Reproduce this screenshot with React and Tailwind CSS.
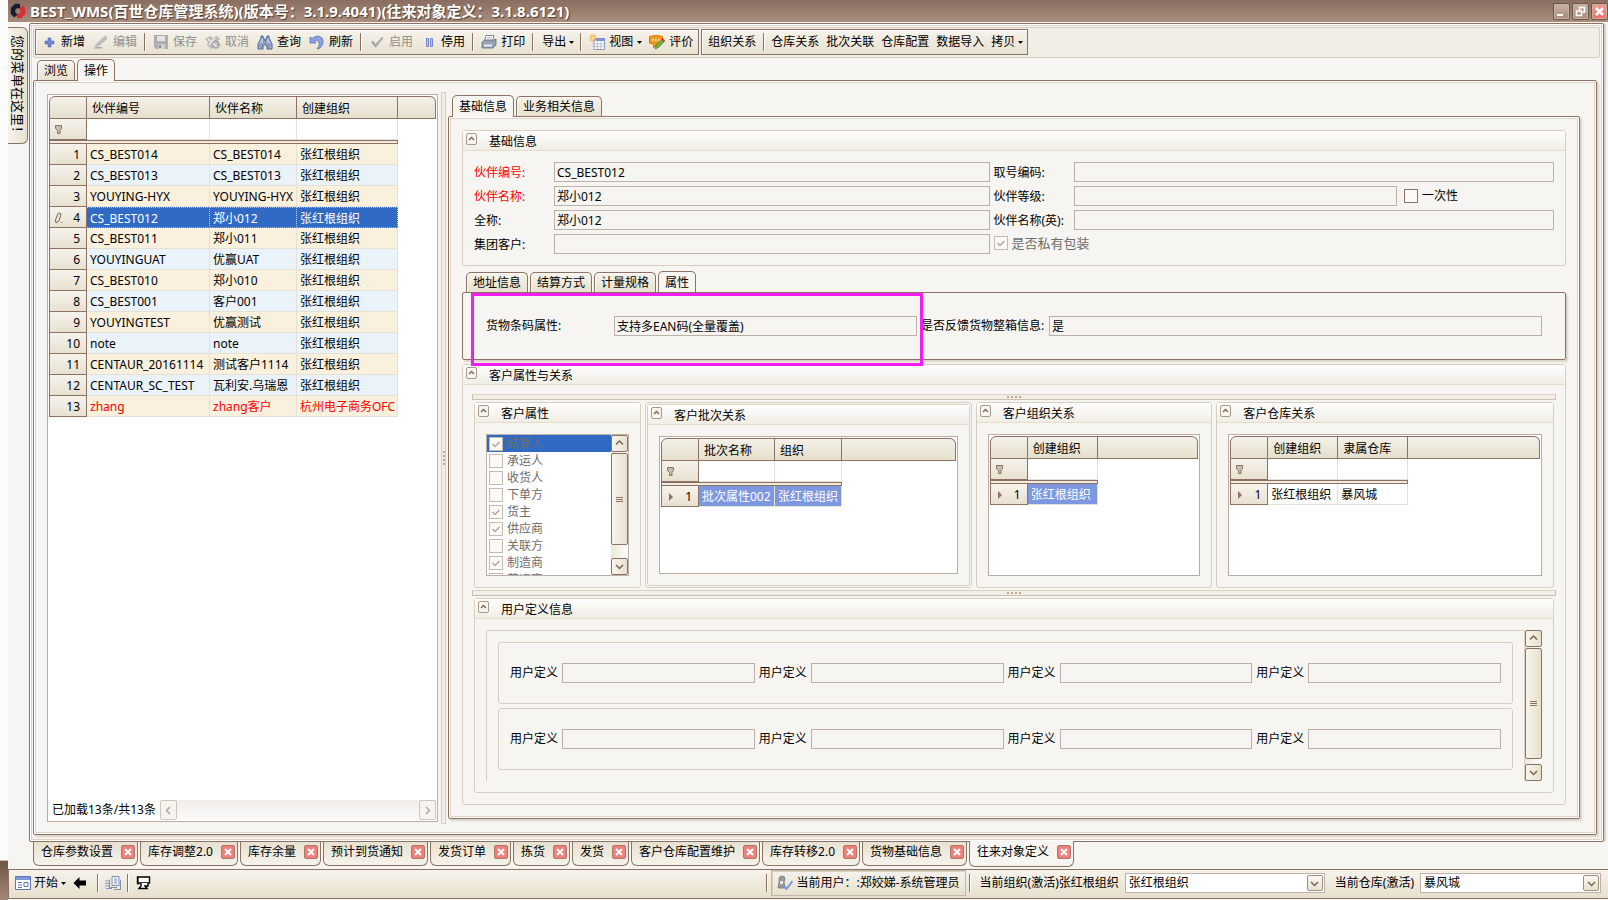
import { useState } from "react";
import clsx from "clsx";

const partners = [
  ["CS_BEST014", "CS_BEST014", "张红根组织"],
  ["CS_BEST013", "CS_BEST013", "张红根组织"],
  ["YOUYING-HYX", "YOUYING-HYX", "张红根组织"],
  ["CS_BEST012", "郑小012", "张红根组织"],
  ["CS_BEST011", "郑小011", "张红根组织"],
  ["YOUYINGUAT", "优赢UAT", "张红根组织"],
  ["CS_BEST010", "郑小010", "张红根组织"],
  ["CS_BEST001", "客户001", "张红根组织"],
  ["YOUYINGTEST", "优赢测试", "张红根组织"],
  ["note", "note", "张红根组织"],
  ["CENTAUR_20161114", "测试客户1114", "张红根组织"],
  ["CENTAUR_SC_TEST", "瓦利安.乌瑞恩", "张红根组织"],
  ["zhang", "zhang客户", "杭州电子商务OFC"],
];

const roles = [
  ["结算人", true],
  ["承运人", false],
  ["收货人", false],
  ["下单方", false],
  ["货主", true],
  ["供应商", true],
  ["关联方", false],
  ["制造商", true],
  ["营运商", false],
];

const docTabs = [
  "仓库参数设置",
  "库存调整2.0",
  "库存余量",
  "预计到货通知",
  "发货订单",
  "拣货",
  "发货",
  "客户仓库配置维护",
  "库存转移2.0",
  "货物基础信息",
  "往来对象定义",
];

/* ---------- icons ---------- */

function Icon({ children, className }) {
  return (
    <svg viewBox="0 0 16 16" className={clsx("size-4 shrink-0", className)} fill="none" aria-hidden="true">
      {children}
    </svg>
  );
}

const AddIcon = () => (
  <Icon>
    <path d="M7 4h3v3h3v3h-3v3H7v-3H4V7h3z" fill="#6f86d6" stroke="#5468b4" strokeWidth=".6" />
  </Icon>
);

const EditIcon = () => (
  <Icon>
    <path d="M1 14l2-4 8-7.500q2-1 3 .5 .8 1.500-.6 2.800L6 12z" fill="#bdbdbd" />
    <path d="M0 14.500h8l2-1.500H4z" fill="#a8a8a8" />
  </Icon>
);

const SaveIcon = () => (
  <Icon>
    <path d="M1 1h14v14H3l-2-2z" fill="#aeaeae" />
    <path d="M4 2h8v5H4z" fill="#e4e4e4" />
    <path d="M5 10h7v5H5z" fill="#d0d0d0" />
    <path d="M6 11h2v3H6z" fill="#8e8e8e" />
  </Icon>
);

const CancelIcon = () => (
  <Icon>
    <path d="M0 5l5-3 3 2 4-2 3 3-2 2 3 4-4 4-3-1-3 1-4-4 1-3z" fill="#bcbcbc" />
    <path d="M3 5l9 8M10 4l-6 7" stroke="#f2f0ea" strokeWidth="1.200" />
    <circle cx="10.500" cy="10.500" r="3.500" stroke="#9c9c9c" />
  </Icon>
);

const FindIcon = () => (
  <Icon>
    <path
      d="M4 2h2v2h1v2h2V4h1V2h2v2l3 6v5h-5v-4H6v4H1v-5l3-6z"
      fill="#aebfe0"
      stroke="#4b5f8c"
      strokeWidth="1"
    />
    <path d="M3 10h2v3H3zM11 10h2v3h-2zM7 6v4M9 6v4" stroke="#4b5f8c" strokeWidth=".8" fill="#e7edf8" />
  </Icon>
);

const RefreshIcon = () => (
  <Icon>
    <path d="M1 3l2 1.500Q9 0 13 4q3 5-2 10l-3 1q4-5 1-8-1.500-1.500-4 .2L7 9H1z" fill="#8ea2e2" stroke="#5c70ba" strokeWidth=".8" />
  </Icon>
);

const CheckIcon = () => (
  <Icon>
    <path d="M2 8l2-1.500L6.500 10 13 3l1.500 1L7 13.500H6z" fill="#a8a8a8" />
  </Icon>
);

const PauseIcon = () => (
  <Icon>
    <path d="M5.500 4.500h2v8h-2zM9.500 4.500h2v8h-2z" fill="#b9c5ee" stroke="#7286cc" />
  </Icon>
);

const PrintIcon = () => (
  <Icon>
    <path d="M5 1.500h8L11.500 7h-8z" fill="#fff" stroke="#7d8796" />
    <path d="M1 8l3-2h9l2-1v6l-3 3H1z" fill="#97a3b6" stroke="#5f6b80" strokeWidth=".8" />
    <path d="M3 10.500h8v2H3z" fill="#e6ebf3" />
    <path d="M6 3.500h5M5.500 5h5" stroke="#a3adbb" strokeWidth=".7" />
  </Icon>
);

const ViewIcon = () => (
  <Icon>
    <path d="M5 4.500h10.500v11H5z" fill="#fff" stroke="#8a97b8" />
    <path d="M5 4h11v3H5z" fill="#7f93d8" />
    <path d="M5 10h10M5 12.500h10M8.500 7v8M12 7v8" stroke="#a9b4cd" strokeWidth=".8" />
    <path d="M4 0v8M0 4h8M1 1l6 6M7 1L1 7" stroke="#f5b44e" strokeWidth="1.200" />
    <circle cx="4" cy="4" r="1.500" fill="#ffe9a8" />
  </Icon>
);

const RateIcon = () => (
  <Icon>
    <path d="M.5 2.500q7-2 13 0v6q-3 1.500-6 1.500l-3 4v-4l-4-1z" fill="#f49a1c" stroke="#d27805" />
    <path d="M3 6h1.500M6 6h1.500M9 6h1.500" stroke="#fff" strokeWidth="1.600" />
    <path d="M6 15l1-4 6-6 2.500 2.500-6 6z" fill="#6fb33c" stroke="#4d8526" strokeWidth=".7" />
    <path d="M12 5.500l1.500-1.500L16 6.500 14.800 8z" fill="#dc3030" />
  </Icon>
);

function Caret() {
  return (
    <svg viewBox="0 0 5 3" className="h-[3px] w-[5px] shrink-0" aria-hidden="true">
      <path d="M0 0h5L2.500 3z" fill="#000" />
    </svg>
  );
}

function Chevron({ dir = "up", className = "stroke-[#7c6353]" }) {
  const d = {
    up: "M1 5.500L4.500 2 8 5.500",
    down: "M1 3L4.500 6.500 8 3",
    left: "M6 1L2.500 4.500 6 8",
    right: "M3 1l3.500 3.500L3 8",
  }[dir];
  return (
    <svg viewBox="0 0 9 9" className={clsx("size-[9px]", className)} fill="none" strokeWidth="1.500" aria-hidden="true">
      <path d={d} />
    </svg>
  );
}

function FilterIcon() {
  return (
    <svg viewBox="0 0 9 9" className="ml-1 size-[9px]" fill="#c9bcae" stroke="#8d7264" aria-hidden="true">
      <path d="M1.500 .5h6v3l-1.500 2v3H3.500V5.500L1.500 3.500z" />
    </svg>
  );
}

/* ---------- small controls ---------- */

function ToolButton({ icon: IconComponent, children, disabled, menu }) {
  return (
    <button
      type="button"
      disabled={disabled}
      className={clsx(
        "flex h-full items-center whitespace-nowrap",
        IconComponent ? "gap-1 pl-1" : "gap-[3px] pl-[5px]",
        menu ? "pr-[3px]" : "pr-1",
        disabled && "text-[#8f8f8f]"
      )}
    >
      {IconComponent && <IconComponent />}
      {children}
      {menu && <Caret />}
    </button>
  );
}

function Separator() {
  return <span className="mx-[3px] h-[18px] w-0.5 shrink-0 border-l border-[#8d7264] bg-white" />;
}

function Tab({ active, children, onClick }) {
  return (
    <button
      type="button"
      role="tab"
      aria-selected={active}
      onClick={onClick}
      className={clsx(
        "whitespace-nowrap rounded-t-[5px] border border-b-0 border-[#8d7264] px-1.5",
        active
          ? "relative -mb-px h-[22px] bg-[#f7f5f1]"
          : "h-5 bg-linear-to-b from-[#f6f3ec] to-[#e8e1d0] shadow-[inset_1px_1px_0_#fff]"
      )}
    >
      {children}
    </button>
  );
}

function TabStrip({ tabs, initial, className }) {
  const [current, setCurrent] = useState(initial);
  return (
    <div role="tablist" className={clsx("flex h-[21px] items-end gap-0.5", className)}>
      {tabs.map((t) => (
        <Tab key={t} active={t === current} onClick={() => setCurrent(t)}>
          {t}
        </Tab>
      ))}
    </div>
  );
}

function TextBox({ id, value = "", label, className }) {
  return (
    <input
      id={id}
      type="text"
      aria-label={label}
      defaultValue={value}
      className={clsx("h-5 min-w-0 border border-[#bdb0a8] bg-transparent px-0.5 outline-none", className)}
    />
  );
}

function CheckBox({ checked, disabled, onChange, children, className }) {
  return (
    <label className={clsx("flex items-center whitespace-nowrap", className)}>
      <span className="grid">
        <input
          type="checkbox"
          defaultChecked={checked}
          disabled={disabled}
          onChange={onChange}
          className={clsx(
            "size-3.5 appearance-none border bg-[#fbfaf7] [grid-area:1/1]",
            disabled ? "border-[#c4bab1]" : "border-[#8d7264]"
          )}
        />
        {checked && (
          <svg viewBox="0 0 14 14" className="size-3.5 [grid-area:1/1]" fill="none" stroke="#b3a89f" strokeWidth="1.500">
            <path d="M3.500 7l2.500 2.500L10.500 5" />
          </svg>
        )}
      </span>
      {children}
    </label>
  );
}

function ScrollButton({ dir }) {
  return (
    <button
      type="button"
      aria-label={dir}
      className="grid size-[17px] shrink-0 place-items-center rounded-xs border border-[#8d7264] bg-linear-to-r from-[#f8f5ee] to-[#e7e0cd]"
    >
      <Chevron dir={dir} />
    </button>
  );
}

function VScroll({ gap }) {
  return (
    <div className="flex w-[17px] shrink-0 flex-col bg-linear-to-r from-[#ece5d9] to-white">
      <ScrollButton dir="up" />
      <div className="my-px grid flex-1 place-content-center gap-px rounded-xs border border-[#8d7264] bg-linear-to-r from-[#f8f5ee] to-[#e7e0cd]">
        <i className="h-px w-[7px] bg-[#8d7264]" />
        <i className="h-px w-[7px] bg-[#8d7264]" />
        <i className="h-px w-[7px] bg-[#8d7264]" />
      </div>
      <div className={gap} />
      <ScrollButton dir="down" />
    </div>
  );
}

function Splitter() {
  return (
    <div className="flex h-1.5 shrink-0 items-center justify-center gap-0.5 border border-t-[#dcd2c4] border-r-[#cabfae] border-b-[#cabfae] border-l-[#cabfae] bg-[#f3efe6]">
      <i className="size-0.5 bg-[#b8a898]" />
      <i className="size-0.5 bg-[#b8a898]" />
      <i className="size-0.5 bg-[#b8a898]" />
      <i className="size-0.5 bg-[#b8a898]" />
    </div>
  );
}

function Group({ title, children, className, bodyClass }) {
  return (
    <section className={clsx("flex min-w-0 flex-col rounded-[3px] border border-[#d9cfc1]", className)}>
      <header className="flex h-5 shrink-0 items-center border-b border-[#e6dec9] bg-linear-to-b from-white to-[#f0ede5] pl-[3px]">
        <button
          type="button"
          aria-label="collapse"
          className="-mt-1 grid h-3 w-[11px] place-items-center rounded-xs border border-[#a8998c] bg-[#f8f5ee]"
        >
          <svg viewBox="0 0 7 5" className="h-[5px] w-[7px]" fill="none" stroke="#7c6353" strokeWidth="1.300">
            <path d="M1 4l2.500-2.500L6 4" />
          </svg>
        </button>
        <h2 className="ml-3 pt-0.5">{title}</h2>
      </header>
      <div className={clsx("flex flex-1 flex-col", bodyClass)}>{children}</div>
    </section>
  );
}

/* ---------- data grid ---------- */

const head = "h-[23px] border-t border-r border-b border-[#8d7264] bg-linear-to-b from-[#f4f1e9] to-[#e6dfcd] font-normal";
const indicator = "border-x border-b border-[#8d7264] bg-linear-to-b from-[#f6f3ec] to-[#e8e1d0]";

function DataGrid({ label, columns, widths, rows, cellClass, rowMark, children, className }) {
  return (
    <div className={clsx("flex flex-col border border-[#b9aca2] bg-white p-px", className)}>
      <table aria-label={label} className="w-full table-fixed border-separate border-spacing-0">
        <colgroup>
          <col className="w-[38px]" />
          {widths.map((w, i) => (
            <col key={i} className={w} />
          ))}
          <col />
        </colgroup>
        <thead>
          <tr>
            <th className={clsx(head, "rounded-tl-md border-l")} />
            {columns.map((c) => (
              <th key={c} scope="col" className={clsx(head, "pt-0.5 pl-[5px] text-left whitespace-nowrap")}>
                {c}
              </th>
            ))}
            <th className={clsx(head, "rounded-tr-md")} />
          </tr>
        </thead>
        <tbody>
          <tr>
            <td className={clsx(indicator, "h-[21px]")}>
              <FilterIcon />
            </td>
            {columns.map((c) => (
              <td key={c} className="border-r border-b border-[#e6e1d4]" />
            ))}
            <td />
          </tr>
          <tr>
            <td colSpan={columns.length + 1} className="h-1 border border-[#8d7264] bg-[#f0ebdf]" />
            <td />
          </tr>
          {rows.map((row, r) => (
            <tr key={r}>
              <td className={clsx(indicator, "h-[21px] pt-0.5")}>
                <div className="flex items-center justify-between pr-1.5 pl-1">
                  <span className="w-2.5">{rowMark(r)}</span>
                  {r + 1}
                </div>
              </td>
              {row.map((cell, c) => (
                <td key={c} className={clsx("border-r border-b pt-0.5 pl-[3px] whitespace-nowrap", cellClass(r))}>
                  {cell}
                </td>
              ))}
              <td />
            </tr>
          ))}
        </tbody>
      </table>
      {children}
    </div>
  );
}

const currentRow = () => (
  <svg viewBox="0 0 10 8" className="h-2 w-2.5" aria-hidden="true">
    <path d="M3 0l4 4-4 4z" fill="#8d7264" />
  </svg>
);

const editMark = (r) =>
  r === 3 && (
    <svg viewBox="0 0 10 12" className="h-3 w-2.5" fill="#efe9dc" stroke="#7c6353" aria-hidden="true">
      <path d="M1.500 8L4 1.500q2-1.500 3 .5L5 9l-3 2zM7.500 10.500h1" />
    </svg>
  );

function partnerClass(r) {
  if (r === 3) return "border-t border-t-[#9db8e6] border-r-[#c8d6ee] border-b-[#9db8e6] border-dotted bg-[#316ac5] text-white";
  return clsx(
    "border-[#e6e1d4]",
    r % 2 ? "bg-[#eaf3fa]" : "bg-[#faf0de]",
    r === 12 && "text-[#f00]"
  );
}

function PartnerList() {
  return (
    <DataGrid
      label="往来对象"
      className="my-0.5 w-[391px] shrink-0"
      columns={["伙伴编号", "伙伴名称", "创建组织"]}
      widths={["w-[123px]", "w-[87px]", "w-[101px]"]}
      rows={partners}
      cellClass={partnerClass}
      rowMark={editMark}
    >
      <div className="mt-auto flex items-center">
        <span className="pr-1 pl-[3px] whitespace-nowrap">已加载13条/共13条</span>
        <div className="flex h-5 flex-1 justify-between bg-linear-to-b from-[#f1eee9] to-[#fbfaf8]">
          <button type="button" aria-label="left" className="grid w-[17px] place-items-center rounded-xs border border-[#cfc6ba] bg-[#f6f4f0]">
            <Chevron dir="left" className="stroke-[#b3a89c]" />
          </button>
          <button type="button" aria-label="right" className="grid w-[17px] place-items-center rounded-xs border border-[#cfc6ba] bg-[#f6f4f0]">
            <Chevron dir="right" className="stroke-[#b3a89c]" />
          </button>
        </div>
      </div>
    </DataGrid>
  );
}

/* ---------- right side ---------- */

function BasicInfo() {
  return (
    <Group title="基础信息" bodyClass="p-[11px]">
      <div className="grid grid-cols-[80px_436fr_84px_481fr] items-center gap-y-1 whitespace-nowrap">
        <label htmlFor="code" className="pt-0.5 text-[#f00]">伙伴编号:</label>
        <TextBox id="code" value="CS_BEST012" />
        <label htmlFor="seq" className="pt-0.5 pl-1">取号编码:</label>
        <TextBox id="seq" />

        <label htmlFor="name" className="pt-0.5 text-[#f00]">伙伴名称:</label>
        <TextBox id="name" value="郑小012" />
        <label htmlFor="level" className="pt-0.5 pl-1">伙伴等级:</label>
        <div className="flex">
          <TextBox id="level" className="flex-1" />
          <CheckBox className="w-[157px] gap-1 pl-[7px]">一次性</CheckBox>
        </div>

        <label htmlFor="full" className="pt-0.5">全称:</label>
        <TextBox id="full" value="郑小012" />
        <label htmlFor="english" className="pt-0.5 pl-1">伙伴名称(英):</label>
        <TextBox id="english" />

        <label htmlFor="parent" className="pt-0.5">集团客户:</label>
        <TextBox id="parent" />
        <CheckBox checked disabled className="col-span-2 gap-1 pb-0.5 pl-1 text-[13px] text-[#6d6d6d]">
          是否私有包装
        </CheckBox>
      </div>
    </Group>
  );
}

function Attributes() {
  return (
    <div className="relative flex h-[68px] items-center rounded-xs border border-[#8d7264] px-[23px] whitespace-nowrap shadow-[2px_2px_2px_#d9d2c6]">
      <label htmlFor="barcode" className="w-32">货物条码属性:</label>
      <TextBox id="barcode" value="支持多EAN码(全量覆盖)" className="flex-[302]" />
      <label htmlFor="fullbox" className="w-[132px] pl-1">是否反馈货物整箱信息:</label>
      <TextBox id="fullbox" value="是" className="flex-[495]" />
      <div className="pointer-events-none absolute top-0 left-2 h-[73px] w-[41%] border-3 border-[#f31cf3]" />
    </div>
  );
}

function Roles() {
  return (
    <Group title="客户属性" bodyClass="p-[11px]">
      <div className="flex h-[142px] border border-[#bdb0a8] bg-white">
        <ul className="flex-1 overflow-hidden">
          {roles.map(([name, on], i) => (
            <li key={name} className={clsx("flex h-[17px] items-center pl-0.5 text-[#6d6d6d]", i === 0 && "bg-[#316ac5]")}>
              <CheckBox checked={on} disabled className="gap-1">
                {name}
              </CheckBox>
            </li>
          ))}
        </ul>
        <VScroll gap="h-3" />
      </div>
    </Group>
  );
}

function Relations() {
  const picked = () => "border-[#e6e1d4] bg-[#7d97e0] text-white";
  const plain = () => "border-[#e6e1d4]";
  return (
    <div className="grid flex-1 grid-cols-[167px_327fr_237fr_338fr] gap-1 px-0.5">
      <Roles />
      <div className="flex rounded-[3px] border border-[#d9cfc1] p-px">
        <Group title="客户批次关系" className="flex-1" bodyClass="p-[11px]">
          <DataGrid
            label="客户批次关系"
            className="flex-1"
            columns={["批次名称", "组织"]}
            widths={["w-[76px]", "w-[67px]"]}
            rows={[["批次属性002", "张红根组织"]]}
            cellClass={picked}
            rowMark={currentRow}
          />
        </Group>
      </div>
      <Group title="客户组织关系" bodyClass="p-[11px]">
        <DataGrid
          label="客户组织关系"
          className="flex-1"
          columns={["创建组织"]}
          widths={["w-[70px]"]}
          rows={[["张红根组织"]]}
          cellClass={picked}
          rowMark={currentRow}
        />
      </Group>
      <Group title="客户仓库关系" bodyClass="p-[11px]">
        <DataGrid
          label="客户仓库关系"
          className="flex-1"
          columns={["创建组织", "隶属仓库"]}
          widths={["w-[70px]", "w-[70px]"]}
          rows={[["张红根组织", "暴风城"]]}
          cellClass={plain}
          rowMark={currentRow}
        />
      </Group>
    </div>
  );
}

function CustomFields() {
  return (
    <Group title="用户定义信息" className="mx-0.5" bodyClass="p-[11px]">
      <div className="flex">
        <div className="flex-1 space-y-1 rounded-t-xs border border-b-0 border-[#d9cfc1] p-[11px]">
          {[1, 2].map((row) => (
            <div key={row} className="flex h-[62px] items-center gap-1 rounded-[3px] border border-[#d9cfc1] px-[11px]">
              {[1, 2, 3, 4].map((n) => (
                <label key={n} className="flex min-w-0 flex-1 items-center gap-1 whitespace-nowrap">
                  用户定义
                  <TextBox className="w-full" />
                </label>
              ))}
            </div>
          ))}
        </div>
        <VScroll gap="h-1" />
      </div>
    </Group>
  );
}

function Detail() {
  return (
    <div className="flex min-w-0 flex-1 flex-col pt-[3px] pb-[5px]">
      <TabStrip tabs={["基础信息", "业务相关信息"]} initial="基础信息" className="pl-1" />
      <div className="flex flex-1 flex-col rounded-xs border border-[#8d7264] p-[13px] shadow-[inset_0_0_0_1px_#fff,inset_0_0_0_2px_#ddd3c6,2px_2px_2px_#d9d2c6]">
        <BasicInfo />
        <TabStrip tabs={["地址信息", "结算方式", "计量规格", "属性"]} initial="属性" className="mt-[5px] pl-1" />
        <Attributes />
        <Group title="客户属性与关系" className="mt-1 flex-1" bodyClass="gap-0.5 px-[9px] pt-[9px] pb-[11px]">
          <Splitter />
          <Relations />
          <Splitter />
          <CustomFields />
        </Group>
      </div>
    </div>
  );
}

/* ---------- window ---------- */

function TitleBar() {
  const btn = "grid size-[17px] place-items-center rounded-xs border border-[#6e5548] bg-linear-to-b from-[#c9b3a6] to-[#a78b7c] shadow-[inset_0_0_0_1px_#c5b1a5]";
  return (
    <header className="flex h-[22px] items-center bg-linear-to-b from-[#896e61] to-[#a98d7d] pl-0.5">
      <svg viewBox="0 0 16 16" className="size-4" fill="none" strokeWidth="4.500" aria-hidden="true">
        <path d="M10 3H6L3 6v4l3 3" stroke="#1c1c30" />
        <path d="M11 4l2 2.500V10l-3 3H7" stroke="#dc2a33" />
      </svg>
      <h1 className="ml-1 flex-1 text-[15px] leading-5 font-bold whitespace-nowrap text-white [text-shadow:1px_1px_1px_#4d3a30]">
        BEST_WMS(百世仓库管理系统)(版本号：3.1.9.4041)(往来对象定义：3.1.8.6121)
      </h1>
      <div className="flex gap-0.5">
        <button type="button" aria-label="最小化" className={btn}>
          <svg viewBox="0 0 11 11" className="size-[11px]" fill="#fff"><path d="M1 8h6v2H1z" /></svg>
        </button>
        <button type="button" aria-label="还原" className={btn}>
          <svg viewBox="0 0 11 11" className="size-[11px]" fill="none" stroke="#fff" strokeWidth="1.500">
            <path d="M4.500 4V1.500h5v4.500H7.500M1.500 5h5v4.500h-5z" />
          </svg>
        </button>
        <button type="button" aria-label="关闭" className={clsx(btn, "from-[#f59a94] to-[#ee6a66]")}>
          <svg viewBox="0 0 11 11" className="size-[11px]" stroke="#fff" strokeWidth="2.500"><path d="M2 2l7 7M9 2L2 9" /></svg>
        </button>
      </div>
    </header>
  );
}

function Toolbar() {
  const bar = "flex h-[26px] items-center border border-[#8d7264] bg-linear-to-b from-[#f6f3ec] to-[#e8e1d0] px-px shadow-[inset_1px_1px_0_#fff]";
  return (
    <div className="mx-[3px] mt-[3px] flex h-[31px] items-start gap-0.5 rounded-xs border border-[#d8cdbe] bg-[#f1eee6] px-px pt-px">
      <div role="toolbar" className={bar}>
        <ToolButton icon={AddIcon}>新增</ToolButton>
        <ToolButton icon={EditIcon} disabled>编辑</ToolButton>
        <Separator />
        <ToolButton icon={SaveIcon} disabled>保存</ToolButton>
        <ToolButton icon={CancelIcon} disabled>取消</ToolButton>
        <ToolButton icon={FindIcon}>查询</ToolButton>
        <ToolButton icon={RefreshIcon}>刷新</ToolButton>
        <Separator />
        <ToolButton icon={CheckIcon} disabled>启用</ToolButton>
        <ToolButton icon={PauseIcon}>停用</ToolButton>
        <Separator />
        <ToolButton icon={PrintIcon}>打印</ToolButton>
        <Separator />
        <ToolButton menu>导出</ToolButton>
        <Separator />
        <ToolButton icon={ViewIcon} menu>视图</ToolButton>
        <ToolButton icon={RateIcon}>评价</ToolButton>
      </div>
      <div role="toolbar" className={bar}>
        <ToolButton>组织关系</ToolButton>
        <Separator />
        <div className="flex h-full gap-[7px] px-[3px] whitespace-nowrap">
          <button type="button">仓库关系</button>
          <button type="button">批次关联</button>
          <button type="button">仓库配置</button>
          <button type="button">数据导入</button>
          <button type="button" className="flex items-center gap-[3px]">
            拷贝
            <Caret />
          </button>
        </div>
      </div>
    </div>
  );
}

function DocTabs() {
  return (
    <nav className="flex h-6 gap-0.5 pl-[25px]">
      {docTabs.map((t, i) => {
        const active = i === docTabs.length - 1;
        return (
          <div
            key={t}
            className={clsx(
              "flex items-center gap-2 rounded-b-md border border-t-0 border-[#8d7264] pr-0.5 pl-[7px] whitespace-nowrap",
              active ? "relative -mt-px h-[26px] bg-[#f7f5f1]" : "bg-linear-to-b from-[#e8e1d0] to-[#f6f3ec]"
            )}
          >
            <button type="button" className="-mt-1">{t}</button>
            <button
              type="button"
              aria-label={`关闭${t}`}
              className="-mt-1 grid size-3.5 place-items-center rounded-xs border border-[#a8786c] bg-[#f0807c]"
            >
              <svg viewBox="0 0 8 8" className="size-2" stroke="#fff" strokeWidth="2"><path d="M1 1l6 6M7 1L1 7" /></svg>
            </button>
          </div>
        );
      })}
    </nav>
  );
}

function Combo({ id, value, className }) {
  return (
    <div className={clsx("flex h-5 border border-[#bdb0a8] bg-white p-px", className)}>
      <select id={id} defaultValue={value} className="min-w-0 flex-1 appearance-none bg-transparent pl-0.5 outline-none">
        <option>{value}</option>
      </select>
      <span className="pointer-events-none grid w-4 place-items-center rounded-xs border border-[#a08c7e] bg-linear-to-b from-[#faf8f2] to-[#e8e1d0]">
        <Chevron dir="down" />
      </span>
    </div>
  );
}

function StatusBar() {
  return (
    <footer className="flex h-[30px] items-center border border-r-0 border-[#8d7264] bg-linear-to-b from-[#f6f3ec] to-[#e7dfcc] pb-0.5 whitespace-nowrap">
      <button type="button" className="flex items-center gap-[3px] pl-1.5">
        <Icon>
          <path d="M.5 1.500h15v13H.5z" fill="#fff" stroke="#5d75b8" />
          <path d="M1 2h14v3H1z" fill="#8196dc" />
          <path d="M3 7.500h4M3 10h4M3 12.500h4M9 7.500h4v4H9z" stroke="#5d75b8" />
        </Icon>
        开始
        <Caret />
      </button>
      <button type="button" aria-label="后退" className="mx-1.5">
        <Icon>
          <path d="M1.500 8l6-6v3.500H14v5H7.500V14z" fill="#000" />
        </Icon>
      </button>
      <Separator />
      <button type="button" aria-label="窗口" className="mx-[3px]">
        <Icon>
          <path d="M7 1.500h7v9H7z" fill="#eef1f6" stroke="#8291a8" />
          <path d="M9 14.500h6.500V5M4.500 4.500v8H12" stroke="#8291a8" />
          <path d="M0 6h4M0 8.500h4M0 11h4M1 13.500h6M9 4h3M9 6h3M9 8h3" stroke="#7c93cf" />
        </Icon>
      </button>
      <Separator />
      <button type="button" aria-label="桌面" className="mx-[3px]">
        <Icon>
          <path d="M2.500 2h12v6h-12z" fill="#fff" stroke="#000" strokeWidth="1.400" />
          <path d="M6 8v3l-2 2.500h8L10 11h3V8" fill="#fff" stroke="#000" strokeWidth="1.400" />
          <path d="M3 2v8" stroke="#000" />
        </Icon>
      </button>
      <div className="ml-auto flex items-center">
        <Separator />
        <div className="flex h-[26px] items-center gap-1 border border-[#c3b7a8] px-[5px] shadow-[inset_1px_1px_0_#d8cfbf]">
          <Icon>
            <path d="M2 4q0-3 3-3t3 3l-1 3 1 6H1l1-5z" fill="#9a9a9a" stroke="#777" strokeWidth=".8" />
            <path d="M3 6h3v3H3z" fill="#e8e8e8" />
            <path d="M7 11l2.500 3L15.500 6" stroke="#7f93dc" strokeWidth="2" />
          </Icon>
          当前用户：:郑姣娣-系统管理员
        </div>
        <Separator />
      </div>
      <label htmlFor="org" className="mx-1.5">当前组织(激活)张红根组织</label>
      <Combo id="org" value="张红根组织" className="w-[200px]" />
      <label htmlFor="wh" className="mr-1.5 ml-2.5">当前仓库(激活)</label>
      <Combo id="wh" value="暴风城" className="mr-[7px] w-[181px]" />
    </footer>
  );
}

export default function App() {
  return (
    <div className="flex min-h-screen bg-[#f7f5f1] font-['Noto_Sans','Noto_Sans_CJK_SC',sans-serif] text-[12px] leading-[14px] text-black">
      <div className="flex w-2 shrink-0 flex-col bg-[#fcfcfc]">
        <div className="mt-auto h-10 border-t border-[#c9bcae] bg-linear-to-b from-[#6f5649] to-[#a48876]" />
      </div>
      <div className="flex min-w-0 flex-1 flex-col">
        <TitleBar />
        <div className="mt-px flex flex-1">
          <button
            type="button"
            className="mt-1 mr-px flex h-[117px] w-5 shrink-0 items-center justify-start rounded-r-md border border-l-0 border-[#8d7264] bg-linear-to-r from-[#f6f3ec] to-[#e8e1d0] pt-[7px] text-[13px] [text-orientation:sideways] [writing-mode:vertical-rl]"
          >
            您的菜单在这里！
          </button>
          <main className="mr-1 flex min-w-0 flex-1 flex-col rounded-xs border border-[#8d7264] pb-1.5 shadow-[inset_0_0_0_1px_#fff,inset_0_0_0_2px_#ddd3c6,2px_0_1px_#d9d2c6]">
            <Toolbar />
            <TabStrip tabs={["浏览", "操作"]} initial="操作" className="mt-px pl-[7px]" />
            <div className="mr-1.5 ml-[3px] flex flex-1 rounded-xs border border-[#8d7264] pt-[11px] pr-4 pb-2.5 pl-[13px] shadow-[inset_0_0_0_1px_#fff,inset_0_0_0_2px_#ddd3c6,2px_2px_2px_#d9d2c6]">
              <PartnerList />
              <div className="mr-0.5 ml-[3px] flex w-[5px] shrink-0 flex-col items-center justify-center gap-0.5 border border-[#d8cdbe] bg-[#f3efe6]">
                <i className="size-0.5 bg-[#b8a898]" />
                <i className="size-0.5 bg-[#b8a898]" />
                <i className="size-0.5 bg-[#b8a898]" />
                <i className="size-0.5 bg-[#b8a898]" />
              </div>
              <Detail />
            </div>
          </main>
        </div>
        <DocTabs />
        <div className="mt-[3px] pb-px">
          <StatusBar />
        </div>
      </div>
    </div>
  );
}
